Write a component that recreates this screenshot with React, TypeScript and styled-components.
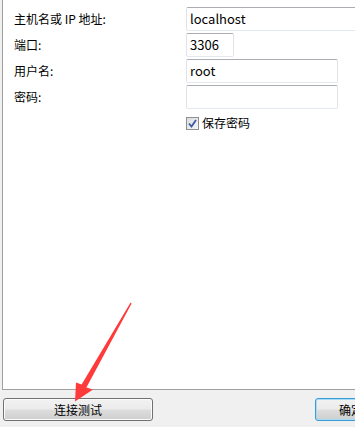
import React from "react";
import styled, { createGlobalStyle } from "styled-components";

const Global = createGlobalStyle`
  html, body { margin: 0; padding: 0; background: #f0f0f0; }
  body { font-family: "Noto Sans CJK SC", "Noto Sans", sans-serif; }
`;

const Window = styled.div`
  position: relative;
  width: 355px;
  height: 427px;
  overflow: hidden;
  background: #f0f0f0;
  display: flex;
  flex-direction: column;
`;

const Panel = styled.div`
  margin-left: 2px;
  width: 400px;
  height: 390px;
  box-sizing: border-box;
  background: #ffffff;
  border-left: 1px solid #a0a0a0;
  border-bottom: 1px solid #a0a0a0;
  padding-top: 7px;
  display: flex;
  flex-direction: column;
`;

const Form = styled.div`
  display: grid;
  grid-template-columns: 183px 1fr;
  row-gap: 2px;
  align-items: center;
`;

const Label = styled.div`
  padding-left: 11px;
  font-size: 12px;
  color: #000;
  line-height: 24px;
  white-space: nowrap;
`;

const Input = styled.div<{ $w: number }>`
  width: ${(p) => p.$w}px;
  height: 24px;
  box-sizing: border-box;
  border: 1px solid #e2e3ea;
  border-top-color: #abadb3;
  border-bottom-color: #e3e9ef;
  border-radius: 2px;
  background: #fff;
  padding-left: 3px;
  font-size: 13px;
  line-height: 22px;
  color: #000;
  font-family: "Noto Sans CJK SC", "Noto Sans", sans-serif;
`;

const CheckRow = styled.label`
  margin-top: 7px;
  margin-left: 183px;
  display: flex;
  align-items: center;
  gap: 3px;
  font-size: 12px;
  color: #000;
  line-height: 14px;
`;

const Box = styled.span`
  width: 13px;
  height: 13px;
  box-sizing: border-box;
  border: 1px solid #8e8f8f;
  background: linear-gradient(135deg, #dcdde0 0%, #f4f5f7 100%);
  display: flex;
  align-items: center;
  justify-content: center;
`;

const Footer = styled.div`
  display: flex;
  justify-content: space-between;
  align-items: flex-start;
  padding-top: 8px;
  padding-left: 3px;
`;

const Button = styled.div<{ $w: number; $default?: boolean }>`
  width: ${(p) => p.$w}px;
  height: 23px;
  box-sizing: border-box;
  border: 1px solid ${(p) => (p.$default ? "#3c9bd7" : "#707070")};
  border-radius: 3px;
  background: linear-gradient(
    to bottom,
    #f2f2f2 0%,
    #ebebeb 48%,
    #dddddd 52%,
    #cfcfcf 100%
  );
  box-shadow: ${(p) =>
    p.$default ? "inset 0 0 0 1px #a6dcf5" : "inset 0 0 0 1px #fcfcfc"};
  display: flex;
  align-items: center;
  justify-content: ${(p) => (p.$default ? "flex-start" : "center")};
  padding-left: ${(p) => (p.$default ? "23px" : "0")};
  font-size: 12px;
  color: #000;
  white-space: nowrap;
  margin-right: ${(p) => (p.$default ? "-50px" : "0")};
`;

const Arrow = styled.svg`
  position: absolute;
  left: 0;
  top: 0;
  pointer-events: none;
`;

export default function App() {
  return (
    <>
      <Global />
      <Window>
        <Panel>
          <Form>
            <Label>主机名或 IP 地址:</Label>
            <Input $w={200}>localhost</Input>
            <Label>端口:</Label>
            <Input $w={48}>3306</Input>
            <Label>用户名:</Label>
            <Input $w={152}>root</Input>
            <Label>密码:</Label>
            <Input $w={152}></Input>
          </Form>
          <CheckRow>
            <Box>
              <svg width="9" height="9" viewBox="0 0 9 9">
                <path
                  d="M1 4.5 L3.5 7.5 L8 1"
                  fill="none"
                  stroke="#3c5aa0"
                  strokeWidth="1.8"
                />
              </svg>
            </Box>
            保存密码
          </CheckRow>
        </Panel>
        <Footer>
          <Button $w={150}>连接测试</Button>
          <Button $w={90} $default>
            确定
          </Button>
        </Footer>
        <Arrow width="355" height="427" viewBox="0 0 355 427">
          <polygon
            points="130.6,302.6 81.6,384.6 76,382.5 75,401.5 93,389.5 86.4,387.4 131.6,303.4"
            fill="#ff3a3a"
          />
        </Arrow>
      </Window>
    </>
  );
}
